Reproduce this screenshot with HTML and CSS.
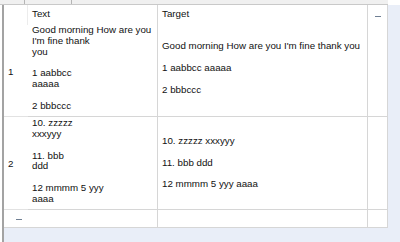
FILE: index.html
```html
<!DOCTYPE html>
<html>
<head>
<meta charset="utf-8">
<link rel="stylesheet" href="styles.css">
</head>
<body>
<div class="top">
  <div class="topcell c1"></div>
  <div class="topcell c2"></div>
  <div class="topcell c3"></div>
</div>
<div class="main">
  <div class="gutter"></div>
  <div class="panel">
    <div class="grid">
      <div class="cell rh head"></div>
      <div class="cell col text head"><span>Text</span></div>
      <div class="cell col target head"><span>Target</span></div>
      <div class="cell extra head"><span class="dash"></span></div>

      <div class="cell rh row1 num">1</div>
      <div class="cell col text row1 lines">Good morning How are you<br>I'm fine thank<br>you<br><br>1 aabbcc<br>aaaaa<br><br>2 bbbccc</div>
      <div class="cell col target row1 mid lines">Good morning How are you I'm fine thank you<br><br>1 aabbcc aaaaa<br><br>2 bbbccc</div>
      <div class="cell extra row1"></div>

      <div class="cell rh row2 num">2</div>
      <div class="cell col text row2 lines">10. zzzzz<br>xxxyyy<br><br>11. bbb<br>ddd<br><br>12 mmmm 5 yyy<br>aaaa</div>
      <div class="cell col target row2 mid lines">10. zzzzz xxxyyy<br><br>11. bbb ddd<br><br>12 mmmm 5 yyy aaaa</div>
      <div class="cell extra row2"></div>

      <div class="cell rh row3 newrow"><span class="dash"></span></div>
      <div class="cell col text row3"></div>
      <div class="cell col target row3"></div>
      <div class="cell extra row3"></div>
    </div>
  </div>
</div>
</body>
</html>
```

FILE: styles.css
```css
html, body {
  margin: 0;
  padding: 0;
}
body {
  width: 400px;
  height: 242px;
  overflow: hidden;
  background: #ffffff;
  font-family: "Liberation Sans", Arial, sans-serif;
  font-size: 9.75px;
  color: #111111;
}
.top {
  display: flex;
  height: 4px;
  background: #f0f0f0;
  border-bottom: 1px solid #c9c9c9;
  width: 388px;
}
.topcell {
  height: 4px;
  box-sizing: border-box;
  border-right: 1px solid #b5b5b5;
}
.c1 { width: 25px; }
.c2 { width: 47px; }
.c3 { flex: 1; border-right: none; }
.main {
  display: flex;
  height: 237px;
}
.gutter {
  width: 2px;
  background: #ffffff;
  border-right: 2px solid #a3a3a3;
}
.panel {
  flex: 1;
  background: #e9eef8;
}
.grid {
  display: grid;
  width: 384px;
  grid-template-columns: 24px 130px 210px 20px;
  grid-template-rows: 20px 92px 93px 18px;
  background: #ffffff;
}
.cell {
  box-sizing: border-box;
  position: relative;
}
.col, .extra {
  border-right: 1px solid #d6d6d6;
}
.rh.head {
  border-right: 1px solid #ececec;
}
.row1, .row2, .row3 {
  border-bottom: 1px solid #d6d6d6;
}
.rh.row1, .rh.row2 {
  border-bottom-color: #e2e2e2;
}
.lines {
  line-height: 10.86px;
}
.head {
  padding: 3px 0 0 4px;
  line-height: 11px;
}
.text.row1 {
  padding: 0 0 0 4px;
}
.text.row2 {
  padding: 1px 0 0 4px;
}
.mid {
  display: flex;
  align-items: center;
  padding-left: 4px;
}
.target.row1 {
  padding-bottom: 4px;
}
.num {
  display: flex;
  align-items: center;
  padding-left: 4px;
}
.row1.num {
  padding-top: 2px;
}
.extra.head {
  display: flex;
  justify-content: center;
  padding: 11px 0 0 0;
}
.dash {
  display: block;
  width: 6px;
  height: 1px;
  background: #6f7f93;
}
.newrow {
  padding: 9px 0 0 12px;
}
```
